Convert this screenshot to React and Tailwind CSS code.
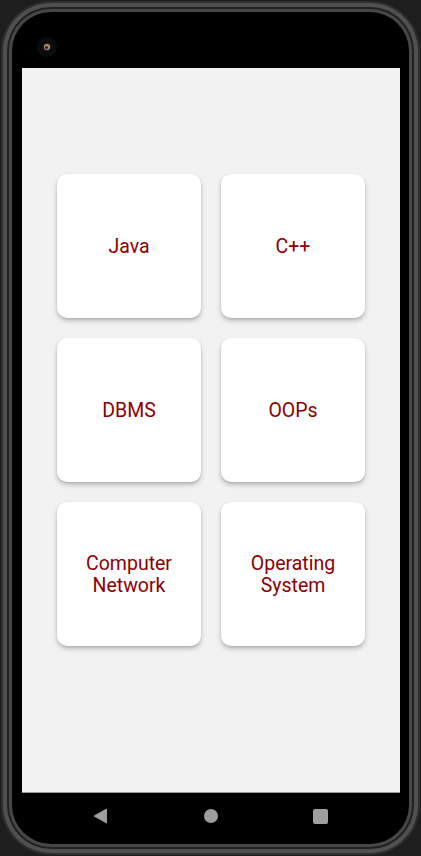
import React from "react";

const items = ["Java", "C++", "DBMS", "OOPs", "Computer Network", "Operating System"];

function Card({ label }) {
  const parts = label.split(" ");
  return (
    <div className="w-[144px] h-[144px] rounded-[10px] bg-white shadow-[0_3px_5px_rgba(0,0,0,0.22),0_1px_2px_rgba(0,0,0,0.12)] flex items-center justify-center text-center">
      <div className="text-[19.5px] leading-[22px] font-normal text-[#8B0000] px-1 pt-[2px]" style={{ fontFamily: "Roboto, 'Noto Sans', sans-serif" }}>
        {parts.length > 1 ? (
          <>
            {parts[0]}
            <br />
            {parts.slice(1).join(" ")}
          </>
        ) : (
          label
        )}
      </div>
    </div>
  );
}

export default function App() {
  return (
    <div className="w-[421px] h-[856px] bg-[#1e1e1e] p-[1px] overflow-hidden" style={{ fontFamily: "Roboto, sans-serif" }}>
      <div className="h-full rounded-[50px] bg-[#2e2e2e] p-[2px]">
        <div className="h-full rounded-[48px] bg-[#505050] p-[4px]">
          <div className="h-full rounded-[44px] bg-[#222222] p-[2px]">
            <div className="h-full rounded-[42px] bg-[#474747] p-[3px]">
              <div className="h-full rounded-[39px] bg-black p-[3px]">
                <div className="h-full rounded-[36px] bg-black flex flex-col">
                  {/* top bezel with camera */}
                  <div className="h-[53px] pl-[22px] pt-[22px]">
                    <div className="w-[20px] h-[20px] rounded-full bg-[#0c0c0c] flex items-center justify-center">
                      <div className="w-[6px] h-[6px] rounded-full bg-[#a88a78] shadow-[0_0_2px_rgba(200,160,130,0.6)]">
                        <div className="w-[3px] h-[3px] rounded-full bg-[#2a2020] ml-[1px] mt-[2px]" />
                      </div>
                    </div>
                  </div>
                  {/* screen */}
                  <div className="ml-[7px] w-[378px] h-[725px] bg-[#f2f2f2] border-b border-[#9a9a9a] pt-[106px]">
                    <div className="grid grid-cols-[144px_144px] gap-[20px] justify-center">
                      {items.map((it) => (
                        <Card key={it} label={it} />
                      ))}
                    </div>
                  </div>
                  {/* nav bar */}
                  <div className="flex-1 flex items-center pl-[78px] -mt-[2px]">
                    <svg width="15" height="16" viewBox="0 0 15 16">
                      <path d="M14 1.2 L14 14.8 Q14 15.6 13.2 15.2 L1.2 8.6 Q0.4 8 1.2 7.4 L13.2 0.8 Q14 0.4 14 1.2 Z" fill="#9e9e9e" />
                    </svg>
                    <div className="ml-[96px] w-[14px] h-[14px] rounded-full bg-[#9e9e9e]" />
                    <div className="ml-[95px] w-[15px] h-[15px] rounded-[2px] bg-[#9e9e9e]" />
                  </div>
                </div>
              </div>
            </div>
          </div>
        </div>
      </div>
    </div>
  );
}
